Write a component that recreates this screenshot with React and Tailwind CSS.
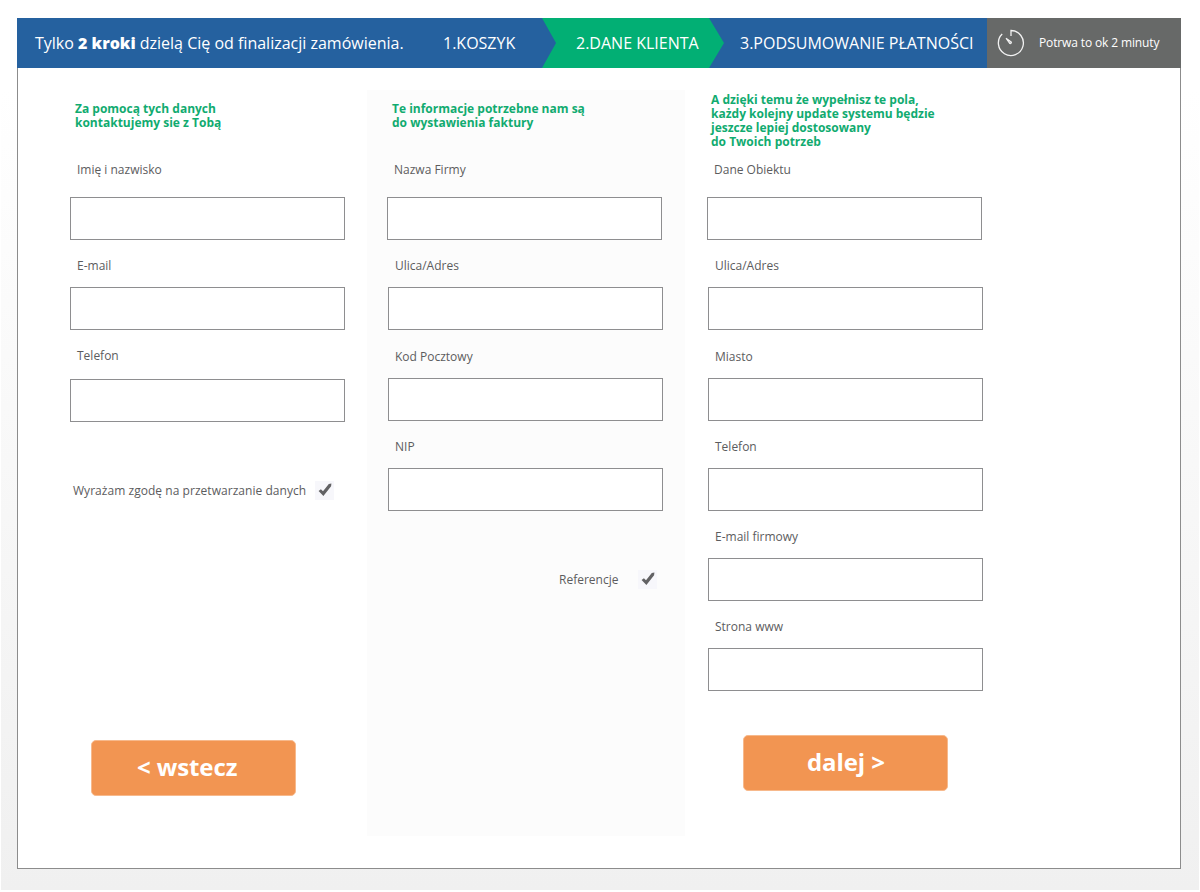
import React from "react";

const GAPS = { first: "mt-[19px]", base: "mt-[13px]", wide: "mt-[15px]" };

function Field({ label, gap = "base", className = "" }) {
  return (
    <label className={`block w-[275px] ${className}`}>
      <span className="block h-4 pl-[7px] text-xs leading-4 whitespace-nowrap">{label}</span>
      <input
        type="text"
        className={`block h-[43px] w-[275px] border border-[#8e8e90] bg-white px-3 text-sm outline-none ${GAPS[gap]}`}
      />
    </label>
  );
}

function Check() {
  return (
    <span className="flex size-[19px] items-center justify-center bg-[#f7f7fb]">
      <svg width="14" height="14" viewBox="0 0 14 14" fill="#626264">
        <path d="M0.6 7.9 2.9 6.2 5 8.2 10.8 0.9 13.4 0.6 13.1 3.2 5.4 12.9Z" />
      </svg>
    </span>
  );
}

function Heading({ children, className = "" }) {
  return (
    <h2 className={`text-xs leading-[14px] font-bold whitespace-nowrap text-[#11ab70] ${className}`}>
      {children}
    </h2>
  );
}

function ActionButton({ children, className = "" }) {
  return (
    <button
      type="button"
      className={`block h-14 w-[205px] rounded-[5px] border border-[#f7b98c] bg-[#f29552] pb-0.5 text-left text-2xl leading-8 font-bold tracking-[-0.1px] whitespace-nowrap text-white ${className}`}
    >
      {children}
    </button>
  );
}

function TimerIcon() {
  return (
    <svg width="28" height="28" viewBox="0 0 28 28" fill="none" stroke="#f2f2f2" strokeWidth="1.3">
      <path d="M14 7V1.5A12.5 12.5 0 1 1 5.2 5" />
      <path d="M9 9.2 14.2 12.8A1.2 1.2 0 0 1 12.8 14.6Z" strokeWidth="1.1" fill="#bdbdbd" />
    </svg>
  );
}

export default function App() {
  return (
    <div className="h-[892px] w-[1200px] bg-white px-px pb-0.5 font-['Open_Sans','Noto_Sans',sans-serif] text-[#5c5c5e]">
      <div className="h-[890px] bg-linear-to-b from-white from-10% to-[#f0f0f0] px-4 pt-[18px]">
        <header className="flex h-[50px] w-[1164px] items-center bg-[#25619f] text-base whitespace-nowrap text-white">
          <p className="w-[426px] pl-[18px]">
            Tylko <strong className="font-extrabold">2 kroki</strong> dzielą Cię od finalizacji zamówienia.
          </p>
          <div className="w-[99px]">1.KOSZYK</div>
          <div className="flex h-full w-[182px] items-center bg-[#02af74] pl-[34px] [clip-path:polygon(0_0,167px_0,100%_50%,167px_100%,0_100%,14px_50%)]">
            2.DANE KLIENTA
          </div>
          <div className="w-[263px] pl-4">3.PODSUMOWANIE PŁATNOŚCI</div>
          <div className="flex h-full flex-1 items-center bg-[#676968] pl-2.5 text-xs">
            <TimerIcon />
            <span className="ml-3.5 tracking-[-0.13px]">Potrwa to ok 2 minuty</span>
          </div>
        </header>

        <main className="flex h-[801px] w-[1164px] border-x border-b border-[#8c8c8c] bg-white">
          <section className="w-[349px] pt-[34px] pl-[52px]">
            <Heading className="pl-[5px]">
              Za pomocą tych danych
              <br />
              kontaktujemy sie z Tobą
            </Heading>
            <Field label="Imię i nazwisko" gap="first" className="mt-8" />
            <Field label="E-mail" className="mt-[18px]" />
            <Field label="Telefon" gap="wide" className="mt-[18px]" />
            <div className="mt-[58px] flex h-5 items-center pl-[3px] text-xs whitespace-nowrap">
              <span className="w-[242px] pt-0.5 tracking-[0.04px]">Wyrażam zgodę na przetwarzanie danych</span>
              <Check />
            </div>
            <ActionButton className="mt-60 ml-[21px] pl-[45px]">&lt; wstecz</ActionButton>
          </section>

          <section className="mt-[22px] h-[746px] w-[318px] bg-[#fcfcfc] pt-3 pl-5">
            <Heading className="pl-[5px]">
              Te informacje potrzebne nam są
              <br />
              do wystawienia faktury
            </Heading>
            <Field label="Nazwa Firmy" gap="first" className="mt-8" />
            <div className="pl-px">
              <Field label="Ulica/Adres" className="mt-[18px]" />
              <Field label="Kod Pocztowy" className="mt-[19px]" />
              <Field label="NIP" className="mt-[18px]" />
              <div className="mt-[58px] flex h-5 items-center pl-[171px] text-xs">
                <span className="w-[79px] pt-0.5">Referencje</span>
                <Check />
              </div>
            </div>
          </section>

          <section className="pt-[25px] pl-[22px]">
            <Heading className="pl-1">
              A dzięki temu że wypełnisz te pola,
              <br />
              każdy kolejny update systemu będzie
              <br />
              jeszcze lepiej dostosowany
              <br />
              do Twoich potrzeb
            </Heading>
            <Field label="Dane Obiektu" gap="first" className="mt-[13px]" />
            <div className="pl-px">
              <Field label="Ulica/Adres" className="mt-[18px]" />
              <Field label="Miasto" className="mt-[19px]" />
              <Field label="Telefon" className="mt-[18px]" />
              <Field label="E-mail firmowy" className="mt-[18px]" />
              <Field label="Strona www" className="mt-[18px]" />
              <ActionButton className="mt-11 ml-[35px] pl-[63px]">dalej &gt;</ActionButton>
            </div>
          </section>
        </main>
      </div>
    </div>
  );
}
